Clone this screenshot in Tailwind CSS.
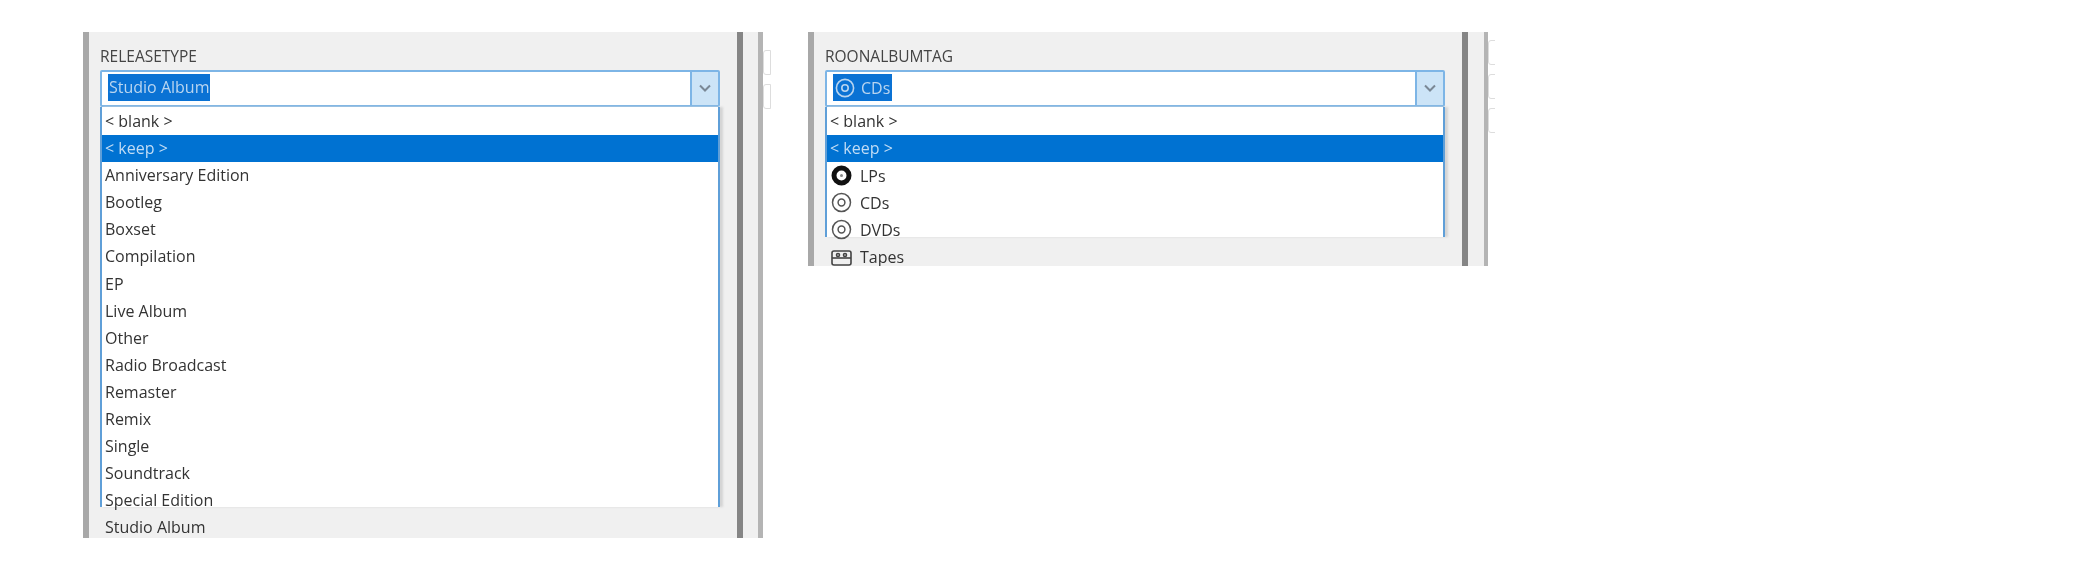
<!DOCTYPE html>
<html lang="en">
<head>
<meta charset="UTF-8">
<script src="https://cdn.jsdelivr.net/npm/@tailwindcss/browser@4"></script>
<title>Tag editor dropdowns</title>
</head>
<body class="bg-white">
<div class="h-[572px] w-[2079px] overflow-hidden bg-white pt-[32px] pl-[83px] flex items-start font-['Open_Sans',sans-serif] text-[16px] text-[#333] blur-[0.5px]">

  <!-- left panel -->
  <div class="h-[506px] w-[688px] flex shrink-0 overflow-hidden">
    <div class="w-[6px] bg-[#a8a8a8] shrink-0"></div>
    <div class="w-[648px] h-full bg-[#f0f0f0] pt-[11px] pl-[11px] shrink-0">
      <div class="h-[27px] leading-[27px] text-[15.5px] text-[#444]">RELEASETYPE</div>
      <div class="w-[620px] h-[37px] border-2 border-[#7db5e6] rounded-[2px] bg-white flex">
        <div class="flex-1 pl-[6px] pt-[2px]"><span class="inline-block h-[27px] leading-[27px] px-[1px] bg-[#0a72d4] text-[#b9d5f0]">Studio Album</span></div>
        <div class="w-[28px] bg-[#cce4f7] border-l-2 border-[#7db5e6] flex items-center justify-center">
          <svg width="14" height="9" viewBox="0 0 14 9" fill="none" stroke="#7a8896" stroke-width="2"><path d="M2 1.5l5 5 5-5"/></svg>
        </div>
      </div>
      <div class="w-[620px] h-[400px] border-x-2 border-[#5f9fd8] bg-white shadow-[3px_0_2px_#d5d5d5] pt-[1px]">
        <div class="h-[27.1px] leading-[27px] pl-[3px]">&lt; blank &gt;</div>
        <div class="h-[27.1px] leading-[27px] pl-[3px] bg-[#0072d2] text-[#c0dcf5]">&lt; keep &gt;</div>
        <div class="h-[27.1px] leading-[27px] pl-[3px]">Anniversary Edition</div>
        <div class="h-[27.1px] leading-[27px] pl-[3px]">Bootleg</div>
        <div class="h-[27.1px] leading-[27px] pl-[3px]">Boxset</div>
        <div class="h-[27.1px] leading-[27px] pl-[3px]">Compilation</div>
        <div class="h-[27.1px] leading-[27px] pl-[3px]">EP</div>
        <div class="h-[27.1px] leading-[27px] pl-[3px]">Live Album</div>
        <div class="h-[27.1px] leading-[27px] pl-[3px]">Other</div>
        <div class="h-[27.1px] leading-[27px] pl-[3px]">Radio Broadcast</div>
        <div class="h-[27.1px] leading-[27px] pl-[3px]">Remaster</div>
        <div class="h-[27.1px] leading-[27px] pl-[3px]">Remix</div>
        <div class="h-[27.1px] leading-[27px] pl-[3px]">Single</div>
        <div class="h-[27.1px] leading-[27px] pl-[3px]">Soundtrack</div>
        <div class="h-[27.1px] leading-[27px] pl-[3px]">Special Edition</div>
        <div class="h-[27.1px] leading-[27px] pl-[3px]">Studio Album</div>
      </div>
    </div>
    <div class="w-[6px] bg-[#858585] shrink-0"></div>
    <div class="w-[15px] bg-[#f0f0f0] shrink-0"></div>
    <div class="w-[5px] bg-[#b4b4b4] shrink-0"></div>
    <div class="w-[8px] pt-[18px] flex flex-col gap-[9px] shrink-0">
      <div class="h-[25px] border border-[#ddd] rounded-l-[3px] bg-white"></div>
      <div class="h-[25px] border border-[#ddd] rounded-l-[3px] bg-white"></div>
    </div>
  </div>

  <div class="w-[37px] shrink-0"></div>

  <!-- right panel -->
  <div class="h-[234px] w-[687px] flex shrink-0 overflow-hidden">
    <div class="w-[6px] bg-[#a8a8a8] shrink-0"></div>
    <div class="w-[648px] h-full bg-[#f0f0f0] pt-[11px] pl-[11px] shrink-0">
      <div class="h-[27px] leading-[27px] text-[15.5px] text-[#444]">ROONALBUMTAG</div>
      <div class="w-[620px] h-[37px] border-2 border-[#7db5e6] rounded-[2px] bg-white flex">
        <div class="flex-1 pl-[6px] pt-[2px]">
          <span class="inline-flex items-center gap-[6px] h-[27px] px-[2px] bg-[#0a72d4] text-[#b9d5f0]">
            <svg width="20" height="20" viewBox="0 0 20 20" fill="none" stroke="#b9d5f0" stroke-width="1.6"><circle cx="10" cy="10" r="8.6"/><circle cx="10" cy="10" r="3.2"/></svg>
            CDs
          </span>
        </div>
        <div class="w-[28px] bg-[#cce4f7] border-l-2 border-[#7db5e6] flex items-center justify-center">
          <svg width="14" height="9" viewBox="0 0 14 9" fill="none" stroke="#7a8896" stroke-width="2"><path d="M2 1.5l5 5 5-5"/></svg>
        </div>
      </div>
      <div class="w-[620px] h-[130px] border-x-2 border-[#5f9fd8] bg-white shadow-[3px_0_2px_#d5d5d5] pt-[1px]">
        <div class="h-[27.1px] leading-[27px] pl-[3px]">&lt; blank &gt;</div>
        <div class="h-[27.1px] leading-[27px] pl-[3px] bg-[#0072d2] text-[#c0dcf5]">&lt; keep &gt;</div>
        <div class="h-[27.1px] flex items-center gap-[8px] pl-[4px]">
          <svg width="21" height="21" viewBox="0 0 21 21"><circle cx="10.5" cy="10.5" r="7.5" fill="none" stroke="#111" stroke-width="5"/><circle cx="10.5" cy="10.5" r="1.5" fill="#888"/></svg>
          LPs
        </div>
        <div class="h-[27.1px] flex items-center gap-[8px] pl-[4px]">
          <svg width="21" height="21" viewBox="0 0 21 21" fill="none" stroke="#555" stroke-width="1.5"><circle cx="10.5" cy="10.5" r="9"/><circle cx="10.5" cy="10.5" r="3.4"/></svg>
          CDs
        </div>
        <div class="h-[27.1px] flex items-center gap-[8px] pl-[4px]">
          <svg width="21" height="21" viewBox="0 0 21 21" fill="none" stroke="#555" stroke-width="1.5"><circle cx="10.5" cy="10.5" r="9"/><circle cx="10.5" cy="10.5" r="3.4"/></svg>
          DVDs
        </div>
        <div class="h-[27.1px] flex items-center gap-[8px] pl-[4px]">
          <svg width="21" height="21" viewBox="0 0 21 21" fill="none" stroke="#444" stroke-width="1.6"><rect x="1" y="4" width="19" height="14" rx="2"/><path d="M1 11h19" /><circle cx="7" cy="8" r="1.5"/><circle cx="14" cy="8" r="1.5"/></svg>
          Tapes
        </div>
      </div>
    </div>
    <div class="w-[6px] bg-[#858585] shrink-0"></div>
    <div class="w-[16px] bg-[#f0f0f0] shrink-0"></div>
    <div class="w-[4px] bg-[#b4b4b4] shrink-0"></div>
    <div class="w-[8px] pt-[8px] flex flex-col gap-[9px] shrink-0">
      <div class="h-[25px] border border-[#ddd] rounded-l-[3px] bg-white"></div>
      <div class="h-[25px] border border-[#ddd] rounded-l-[3px] bg-white"></div>
      <div class="h-[25px] border border-[#ddd] rounded-l-[3px] bg-white"></div>
    </div>
  </div>
</div>
</body>
</html>
